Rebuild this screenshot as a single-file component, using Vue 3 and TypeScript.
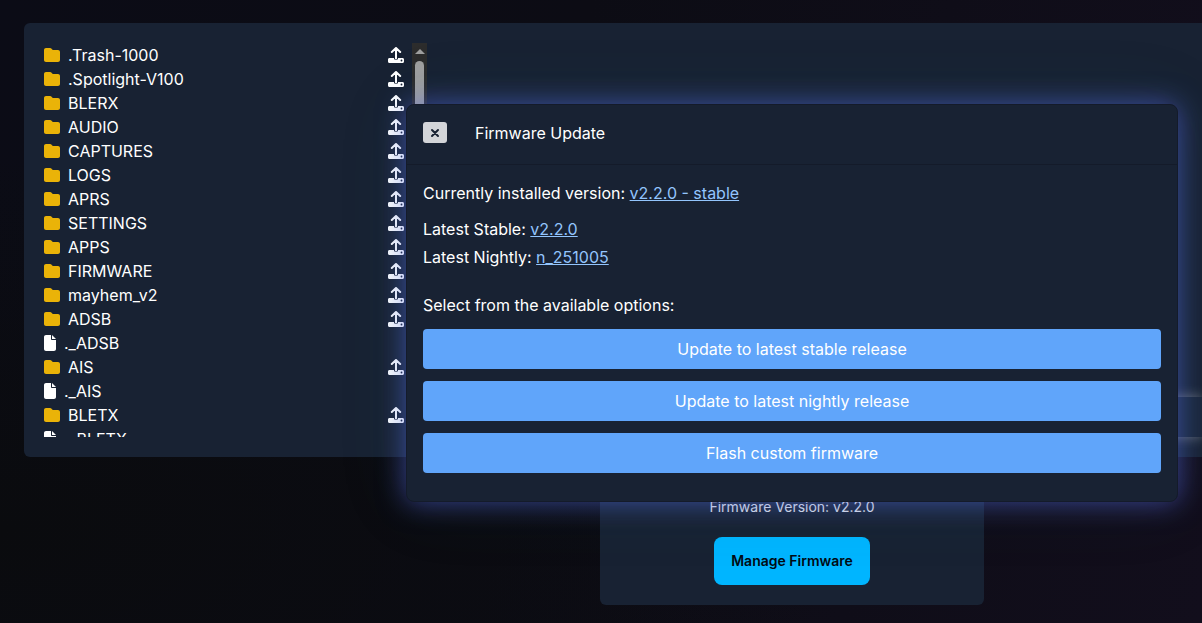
<script setup lang="ts">
interface Entry {
  name: string
  folder: boolean
}

const entries: Entry[] = [
  { name: '.Trash-1000', folder: true },
  { name: '.Spotlight-V100', folder: true },
  { name: 'BLERX', folder: true },
  { name: 'AUDIO', folder: true },
  { name: 'CAPTURES', folder: true },
  { name: 'LOGS', folder: true },
  { name: 'APRS', folder: true },
  { name: 'SETTINGS', folder: true },
  { name: 'APPS', folder: true },
  { name: 'FIRMWARE', folder: true },
  { name: 'mayhem_v2', folder: true },
  { name: 'ADSB', folder: true },
  { name: '._ADSB', folder: false },
  { name: 'AIS', folder: true },
  { name: '._AIS', folder: false },
  { name: 'BLETX', folder: true },
  { name: '._BLETX', folder: false },
]

const actions: string[] = [
  'Update to latest stable release',
  'Update to latest nightly release',
  'Flash custom firmware',
]
</script>

<template>
  <div class="page">
    <main>
      <section class="panel">
        <div class="browser">
          <ul class="files">
            <li v-for="entry in entries" :key="entry.name" class="file">
              <svg v-if="entry.folder" class="icon folder" viewBox="0 0 512 512" aria-hidden="true">
                <path
                  d="M64 480H448c35.300 0 64-28.700 64-64V160c0-35.300-28.700-64-64-64H288c-10.100 0-19.600-4.700-25.600-12.800L243.200 57.600C231.100 41.500 212.100 32 192 32H64C28.700 32 0 60.700 0 96V416c0 35.300 28.700 64 64 64z"
                />
              </svg>
              <svg v-else class="icon document" viewBox="0 0 384 512" aria-hidden="true">
                <path
                  d="M0 64C0 28.700 28.700 0 64 0H224V128c0 17.700 14.300 32 32 32H384V448c0 35.300-28.700 64-64 64H64c-35.300 0-64-28.700-64-64V64zm384 64H256V0L384 128z"
                />
              </svg>
              <span class="name">{{ entry.name }}</span>
              <button v-if="entry.folder" type="button" class="upload" :aria-label="`Upload to ${entry.name}`">
                <svg class="icon tray" viewBox="0 0 16 16" aria-hidden="true">
                  <path class="arrow" d="M8 11.500V1.500M3.800 5 8 1l4.200 4" />
                  <path
                    fill-rule="evenodd"
                    d="M1.500 11H6v.6c0 .8.700 1.400 2 1.400s2-.6 2-1.400V11h4.500c.9 0 1.500.6 1.500 1.500v2c0 .9-.6 1.500-1.500 1.500h-13C.6 16 0 15.400 0 14.500v-2C0 11.600.6 11 1.500 11zM13.500 12.600a.9.9 0 1 0 0 1.800.9.9 0 0 0 0-1.800z"
                  />
                </svg>
              </button>
            </li>
          </ul>
          <div class="scrollbar" aria-hidden="true">
            <span class="scroll-up"></span>
            <span class="thumb"></span>
          </div>
          <div class="console">
            <input class="command" type="text" aria-label="Command" />
          </div>
        </div>
      </section>
      <div class="lower">
        <section class="card">
          <p class="version">Firmware Version: v2.2.0</p>
          <button type="button" class="manage">Manage Firmware</button>
        </section>
      </div>
    </main>

    <div class="overlay">
      <div class="modal" role="dialog" aria-labelledby="dialog-title">
        <header class="modal-head">
          <button type="button" class="close" aria-label="Close">
            <svg viewBox="0 0 10 10" aria-hidden="true"><path d="M2 2l6 6M8 2l-6 6" /></svg>
          </button>
          <h2 id="dialog-title">Firmware Update</h2>
        </header>
        <div class="modal-body">
          <p class="installed">Currently installed version: <a href="#installed">v2.2.0 - stable</a></p>
          <p class="latest">Latest Stable: <a href="#stable">v2.2.0</a></p>
          <p class="latest">Latest Nightly: <a href="#nightly">n_251005</a></p>
          <p class="prompt">Select from the available options:</p>
          <div class="actions">
            <button v-for="action in actions" :key="action" type="button" class="action">{{ action }}</button>
          </div>
        </div>
      </div>
    </div>
  </div>
</template>

<style>
body {
  background: #0c0c14;
}
</style>

<style scoped>
.page {
  position: relative;
  box-sizing: border-box;
  min-height: 100vh;
  padding: 23px 0 18px 24px;
  overflow: hidden;
  background:
    radial-gradient(ellipse at 0 85%, #0a0b0e 0, transparent 50%),
    linear-gradient(100deg, #0b0c16 0, #0c0c14 45%, #120e1c 100%);
  color: #fff;
  font-family: Inter, "Liberation Sans", sans-serif;
  font-size: 16px;
  line-height: 24px;
}

button {
  border: 0;
  padding: 0;
  font: inherit;
  cursor: pointer;
}

p,
h2,
ul {
  margin: 0;
  padding: 0;
}

.panel {
  padding: 20px 0 20px 20px;
  border-radius: 6px 0 0 6px;
  background: #182233;
}

.browser {
  display: flex;
  height: 394px;
}

.files {
  width: 368px;
  overflow: hidden;
  list-style: none;
}

.file {
  display: flex;
  align-items: center;
  gap: 8px;
  height: 24px;
  padding-right: 8px;
}

.icon {
  display: block;
  height: 16px;
  fill: currentColor;
}

.folder {
  width: 16px;
  color: #eab308;
}

.document {
  width: 12px;
}

.name {
  flex: 1;
}

.upload {
  background: none;
  color: #fff;
}

.tray {
  width: 16px;
}

.arrow {
  fill: none;
  stroke: currentColor;
  stroke-width: 2;
  stroke-linecap: round;
  stroke-linejoin: round;
}

.scrollbar {
  display: flex;
  flex-direction: column;
  align-items: center;
  gap: 7px;
  box-sizing: border-box;
  width: 15px;
  padding-top: 6px;
  background: #2c2c2c;
}

.scroll-up {
  border: 5px solid transparent;
  border-top: 0;
  border-bottom-color: #9f9f9f;
}

.thumb {
  width: 9px;
  height: 180px;
  border-radius: 5px;
  background: #9f9f9f;
}

.console {
  display: flex;
  flex: 1;
  align-items: flex-end;
  padding-left: 24px;
}

.command {
  flex: 1;
  box-sizing: border-box;
  min-width: 0;
  height: 40px;
  border: 0;
  background: #1a263a;
  color: inherit;
  font: inherit;
  box-shadow: 0 0 12px rgba(255, 255, 255, 0.35);
}

.lower {
  display: flex;
  justify-content: center;
  padding-left: 358px;
}

.card {
  display: flex;
  flex-direction: column;
  align-items: center;
  gap: 20px;
  box-sizing: border-box;
  width: 384px;
  padding: 40px 20px 20px;
  border-radius: 6px;
  background: #182233;
}

.version {
  color: #e2e4ea;
  font-size: 14px;
  line-height: 20px;
}

.manage {
  height: 48px;
  padding: 0 17px;
  border-radius: 8px;
  background: #00b5ff;
  color: #000b14;
  font-size: 14px;
  font-weight: 600;
}

.overlay {
  position: absolute;
  inset: 0;
  display: flex;
  align-items: center;
  padding: 0 24px 17px 406px;
}

.modal {
  flex: 1;
  border: 1px solid #141b2a;
  border-radius: 8px;
  background: #182233;
  box-shadow:
    0 0 28px rgba(92, 112, 255, 0.54),
    0 0 72px rgba(30, 110, 90, 0.12);
}

.modal-head {
  display: flex;
  align-items: center;
  gap: 28px;
  box-sizing: border-box;
  height: 60px;
  padding: 0 16px 4px;
  border-bottom: 1px solid #141b2a;
}

.modal-head h2 {
  font-size: 16px;
  font-weight: 400;
}

.close {
  display: flex;
  align-items: center;
  justify-content: center;
  width: 24px;
  height: 21px;
  border-radius: 3px;
  background: #d3d5d9;
}

.close svg {
  width: 10px;
  height: 10px;
  fill: none;
  stroke: #182233;
  stroke-width: 2;
  stroke-linecap: round;
}

.modal-body {
  padding: 16px 16px 28px;
}

a {
  color: #93c5fd;
  text-decoration: underline;
}

.installed {
  margin-bottom: 12px;
}

.latest {
  margin-bottom: 4px;
}

.prompt {
  margin: 24px 0 12px;
}

.actions {
  display: grid;
  gap: 12px;
}

.action {
  height: 40px;
  border-radius: 4px;
  background: #60a5fa;
  color: #fff;
}
</style>
